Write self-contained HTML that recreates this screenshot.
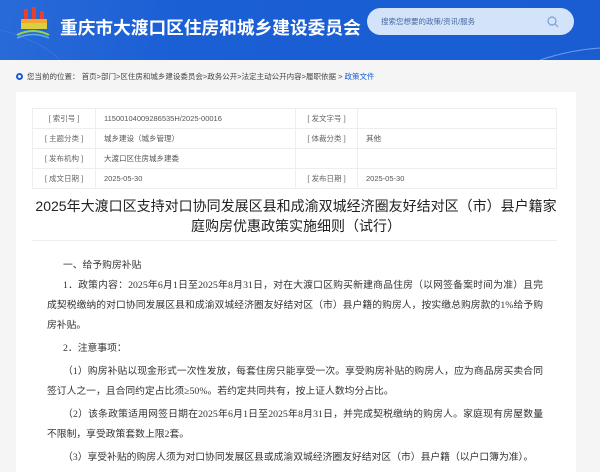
<!DOCTYPE html>
<html><head><meta charset="utf-8"><style>
*{margin:0;padding:0;box-sizing:border-box}
body{width:600px;height:467px;overflow:hidden;background:#f5f5f5;font-family:"Liberation Sans","Noto Sans CJK SC",sans-serif;color:#333;position:relative}
.hd{position:absolute;left:0;top:0;width:600px;height:60px;background:linear-gradient(100deg,#2a6ad8 0%,#1b5fd5 30%,#1a5dd3 100%);overflow:hidden}
.hd .t{position:absolute;left:60px;top:14px;font-size:17.7px;font-weight:bold;color:#fff;white-space:nowrap}
.sb{position:absolute;left:367px;top:8px;width:207px;height:27px;border-radius:14px;background:#d3e3fa}
.sb span{position:absolute;left:14px;top:8px;font-size:7.5px;color:#4a6aa0}
.crumb{position:absolute;left:16px;top:71px;font-size:7.5px;color:#444}
.crumb i{display:inline-block;width:7px;height:7px;border-radius:50%;border:2px solid #1a5dd3;vertical-align:-1px;margin-right:4px}
.crumb b{font-weight:normal;color:#1a5dd3}
.pn{position:absolute;left:16px;top:92px;width:560px;height:380px;background:#fff}
table{position:absolute;left:32px;top:108px;width:525px;border-collapse:collapse;font-size:7.5px;color:#555}
td{border:1px solid #eee;height:20px;padding:0 8px}
td.l{text-align:center;color:#666}
.ti{position:absolute;left:16px;width:560px;text-align:center;font-size:14px;color:#222;line-height:20px;white-space:nowrap}
.sep{position:absolute;left:32px;top:240px;width:525px;border-top:1px solid #eee}
.p{position:absolute;left:47px;width:496px;font-size:9.8px;color:#333;white-space:nowrap;line-height:20px;font-family:"Liberation Serif","Noto Sans CJK SC",serif}
.j{text-align:justify;text-align-last:justify}
</style></head><body>
<div class="hd">
<svg width="600" height="60" style="position:absolute;left:0;top:0"><path d="M0 30 Q40 40 60 60" stroke="#4a82e0" stroke-width="1" fill="none" opacity=".5"/><path d="M540 60 Q570 50 600 48" stroke="#6a9be8" stroke-width="1" fill="none"/></svg>
<svg width="36" height="34" style="position:absolute;left:15px;top:5px"><rect x="9" y="4" width="4" height="18" fill="#e8402a"/><rect x="17" y="2" width="4" height="20" fill="#e8402a"/><rect x="25" y="6" width="4" height="16" fill="#e8402a"/><rect x="6" y="14" width="26" height="10" fill="#f0a830"/><rect x="6" y="18" width="26" height="6" fill="#d8d040"/><path d="M2 30 Q18 22 34 30" stroke="#9ad050" stroke-width="2" fill="none"/><path d="M2 33 Q18 26 34 33" stroke="#60b0e0" stroke-width="1.5" fill="none"/></svg>
<div class="t">重庆市大渡口区住房和城乡建设委员会</div>
<div class="sb"><span>搜索您想要的政策/资讯/服务</span><svg width="12" height="12" style="position:absolute;left:180px;top:8px"><circle cx="5" cy="5" r="4" stroke="#7aa0d8" stroke-width="1.2" fill="none"/><path d="M8 8L11 11" stroke="#7aa0d8" stroke-width="1.2"/></svg></div>
</div>
<div class="crumb"><i></i>您当前的位置： 首页&gt;部门&gt;区住房和城乡建设委员会&gt;政务公开&gt;法定主动公开内容&gt;履职依据 &gt; <b>政策文件</b></div>
<div class="pn"></div>
<table>
<tr><td class="l" style="width:63px">[ 索引号 ]</td><td style="width:200px">11500104009286535H/2025-00016</td><td class="l" style="width:62px">[ 发文字号 ]</td><td></td></tr>
<tr><td class="l">[ 主题分类 ]</td><td>城乡建设（城乡管理）</td><td class="l">[ 体裁分类 ]</td><td>其他</td></tr>
<tr><td class="l">[ 发布机构 ]</td><td>大渡口区住房城乡建委</td><td></td><td></td></tr>
<tr><td class="l">[ 成文日期 ]</td><td>2025-05-30</td><td class="l">[ 发布日期 ]</td><td>2025-05-30</td></tr>
</table>
<div class="ti" style="top:196px">2025年大渡口区支持对口协同发展区县和成渝双城经济圈友好结对区（市）县户籍家</div>
<div class="ti" style="top:216px">庭购房优惠政策实施细则（试行）</div>
<div class="sep"></div>
<div class="p" style="top:256px;left:63px">一、给予购房补贴</div>
<div class="p j" style="top:276px;left:63px;width:480px">1．政策内容：2025年6月1日至2025年8月31日，对在大渡口区购买新建商品住房（以网签备案时间为准）且完</div>
<div class="p j" style="top:296px">成契税缴纳的对口协同发展区县和成渝双城经济圈友好结对区（市）县户籍的购房人，按实缴总购房款的1%给予购</div>
<div class="p" style="top:316px">房补贴。</div>
<div class="p" style="top:339px;left:63px">2．注意事项：</div>
<div class="p j" style="top:362px;left:63px;width:480px">（1）购房补贴以现金形式一次性发放，每套住房只能享受一次。享受购房补贴的购房人，应为商品房买卖合同</div>
<div class="p" style="top:382px">签订人之一，且合同约定占比须≥50%。若约定共同共有，按上证人数均分占比。</div>
<div class="p j" style="top:405px;left:63px;width:480px">（2）该条政策适用网签日期在2025年6月1日至2025年8月31日，并完成契税缴纳的购房人。家庭现有房屋数量</div>
<div class="p" style="top:425px">不限制，享受政策套数上限2套。</div>
<div class="p" style="top:448px;left:63px">（3）享受补贴的购房人须为对口协同发展区县或成渝双城经济圈友好结对区（市）县户籍（以户口簿为准）。</div>
</body></html>
